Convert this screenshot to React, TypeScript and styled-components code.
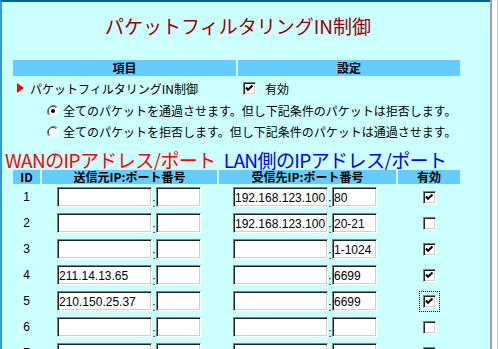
import { Fragment } from 'react';
import styled, { createGlobalStyle } from 'styled-components';

const GlobalStyle = createGlobalStyle`
    html, body {
        margin: 0;
        padding: 0;
        background: #ffffff;
    }
    body {
        font-family: "Noto Sans CJK JP", "Liberation Sans", sans-serif;
        font-size: 12px;
        color: #000000;
    }
`

const Frame = styled.div`
    display: flex;
    width: 498px;
    height: 349px;
    overflow: hidden;
`

const Page = styled.div`
    width: 491px;
    height: 347px;
    background: #ccffff;
    border-top: 2px solid #0b5f99;
    border-left: 2px solid #3399dd;
    overflow: hidden;
`

const EdgeBar = styled.div`
    width: 5px;
    border-left: 2px solid #a0a0a0;
    border-right: 1px solid #c8c8c8;
    background: #ffffff;
`

const Content = styled.div`
    width: 472px;
    display: flex;
    flex-direction: column;
`

const Title = styled.h1`
    margin: 10px 0 20px;
    height: 28px;
    line-height: 28px;
    text-align: center;
    font-size: 19px;
    font-weight: normal;
    color: #990000;
`

const SettingsGrid = styled.div`
    margin-left: 11px;
    width: 447px;
    display: grid;
    grid-template-columns: 223px 222px;
    column-gap: 2px;
`

const HeadCell = styled.div`
    height: 16px;
    line-height: 16px;
    background: #66ccff;
    text-align: center;
    font-weight: bold;
    font-size: 12px;
`

const SettingCell = styled.div<{ $indent: number }>`
    height: 24px;
    display: flex;
    align-items: center;
    padding-left: ${({ $indent }) => $indent}px;
    gap: 6px;
`

const SettingText = styled.span<{ $shift?: number }>`
    margin-left: ${({ $shift }) => $shift ?? 0}px;
`

const Marker = styled.span`
    width: 0;
    height: 0;
    border-top: 5px solid transparent;
    border-bottom: 5px solid transparent;
    border-left: 7px solid #ff0000;
`

const RadioRow = styled.div`
    height: 21px;
    display: flex;
    align-items: center;
    padding-left: 45px;
    gap: 4px;
`

const Legends = styled.div`
    margin-top: 8px;
    height: 20px;
    display: flex;
    align-items: center;
    padding-left: 3px;
    gap: 8px;
`

const Legend = styled.span<{ $color: string }>`
    font-size: 19px;
    line-height: 20px;
    color: ${({ $color }) => $color};
    letter-spacing: -0.6px;
    white-space: nowrap;
`

const FilterGrid = styled.div`
    margin-left: 11px;
    width: 447px;
    display: grid;
    grid-template-columns: 27px 175px 177px 62px;
    column-gap: 2px;
`

const TableHead = styled.div`
    height: 14px;
    line-height: 14px;
    background: #66ccff;
    text-align: center;
    font-weight: bold;
    font-size: 12px;
`

const IdCell = styled.div`
    height: 26px;
    display: flex;
    align-items: center;
    justify-content: center;
    font-family: "Liberation Sans", sans-serif;
    font-size: 12px;
`

const AddrCell = styled.div<{ $indent: number }>`
    height: 26px;
    display: flex;
    align-items: center;
    padding-left: ${({ $indent }) => $indent}px;
`

const Field = styled.input<{ $w: number }>`
    box-sizing: border-box;
    width: ${({ $w }) => $w}px;
    height: 20px;
    margin: 0;
    padding: 1px 0 0 1px;
    background: #ffffff;
    border-top: 1px solid #808080;
    border-left: 1px solid #808080;
    border-bottom: 1px solid #ffffff;
    border-right: 1px solid #ffffff;
    box-shadow: inset 1px 1px 0 #202020, inset -1px -1px 0 #d4d0c8;
    font-family: "Liberation Sans", sans-serif;
    font-size: 12px;
    color: #000000;
    outline: none;
`

const Colon = styled.span`
    width: 4px;
    align-self: flex-end;
    margin-bottom: 1px;
    font-family: "Liberation Sans", sans-serif;
    font-size: 12px;
    line-height: 12px;
    text-align: center;
`

const CheckCell = styled.div`
    height: 26px;
    display: flex;
    align-items: center;
    justify-content: center;
`

const FocusRing = styled.div<{ $on?: boolean }>`
    padding: 3px;
    border: 1px dotted ${({ $on }) => ($on ? '#000000' : 'transparent')};
    display: flex;
`

const Box = styled.span`
    box-sizing: border-box;
    width: 13px;
    height: 13px;
    display: inline-flex;
    align-items: center;
    justify-content: center;
    background: #ffffff;
    border-top: 1px solid #808080;
    border-left: 1px solid #808080;
    border-bottom: 1px solid #ffffff;
    border-right: 1px solid #ffffff;
    box-shadow: inset 1px 1px 0 #202020, inset -1px -1px 0 #d4d0c8;
`

function CheckBox({ checked }: { checked?: boolean }) {
    return (
        <Box>
            {checked && (
                <svg width="9" height="9" viewBox="0 0 9 9">
                    <path d="M1 3.5 L3 5.8 L7.5 1.5" stroke="#000" strokeWidth="2" fill="none" />
                </svg>
            )}
        </Box>
    )
}

function Radio({ checked }: { checked?: boolean }) {
    return (
        <svg width="12" height="12" viewBox="0 0 12 12">
            <path d="M10.2 1.8 A6 6 0 0 0 1.8 10.2" stroke="#808080" strokeWidth="1" fill="none" />
            <path d="M1.8 10.2 A6 6 0 0 0 10.2 1.8" stroke="#ffffff" strokeWidth="1" fill="none" />
            <circle cx="6" cy="6" r="4.6" fill="#ffffff" />
            <path d="M9.3 2.7 A4.6 4.6 0 0 0 2.7 9.3" stroke="#404040" strokeWidth="1" fill="none" />
            {checked && <circle cx="6" cy="6" r="2" fill="#000000" />}
        </svg>
    )
}

const rows = [
    { id: 1, src: '', srcPort: '', dst: '192.168.123.100', dstPort: '80', on: true },
    { id: 2, src: '', srcPort: '', dst: '192.168.123.100', dstPort: '20-21', on: false },
    { id: 3, src: '', srcPort: '', dst: '', dstPort: '1-1024', on: true },
    { id: 4, src: '211.14.13.65', srcPort: '', dst: '', dstPort: '6699', on: true },
    { id: 5, src: '210.150.25.37', srcPort: '', dst: '', dstPort: '6699', on: true, focus: true },
    { id: 6, src: '', srcPort: '', dst: '', dstPort: '', on: false },
    { id: 7, src: '', srcPort: '', dst: '', dstPort: '', on: false },
]

export default function App() {
    return (
        <Frame>
            <GlobalStyle />
            <Page>
                <Content>
                    <Title>パケットフィルタリングIN制御</Title>

                    <SettingsGrid>
                        <HeadCell>項目</HeadCell>
                        <HeadCell>設定</HeadCell>
                        <SettingCell $indent={4}>
                            <Marker />
                            <SettingText>パケットフィルタリングIN制御</SettingText>
                        </SettingCell>
                        <SettingCell $indent={5}>
                            <CheckBox checked />
                            <SettingText $shift={3}>有効</SettingText>
                        </SettingCell>
                    </SettingsGrid>

                    <RadioRow>
                        <Radio checked />
                        <span>全てのパケットを通過させます。但し下記条件のパケットは拒否します。</span>
                    </RadioRow>
                    <RadioRow>
                        <Radio />
                        <span>全てのパケットを拒否します。但し下記条件のパケットは通過させます。</span>
                    </RadioRow>

                    <Legends>
                        <Legend $color="#ff0000">WANのIPアドレス/ポート</Legend>
                        <Legend $color="#0000ff">LAN側のIPアドレス/ポート</Legend>
                    </Legends>

                    <FilterGrid>
                        <TableHead>ID</TableHead>
                        <TableHead>送信元IP:ポート番号</TableHead>
                        <TableHead>受信先IP:ポート番号</TableHead>
                        <TableHead>有効</TableHead>
                        {rows.map((r) => (
                            <Fragment key={r.id}>
                                <IdCell>{r.id}</IdCell>
                                <AddrCell $indent={15}>
                                    <Field $w={95} defaultValue={r.src} />
                                    <Colon>:</Colon>
                                    <Field $w={45} defaultValue={r.srcPort} />
                                </AddrCell>
                                <AddrCell $indent={14}>
                                    <Field $w={95} defaultValue={r.dst} />
                                    <Colon>:</Colon>
                                    <Field $w={45} defaultValue={r.dstPort} />
                                </AddrCell>
                                <CheckCell>
                                    <FocusRing $on={r.focus}>
                                        <CheckBox checked={r.on} />
                                    </FocusRing>
                                </CheckCell>
                            </Fragment>
                        ))}
                    </FilterGrid>
                </Content>
            </Page>
            <EdgeBar />
        </Frame>
    )
}
